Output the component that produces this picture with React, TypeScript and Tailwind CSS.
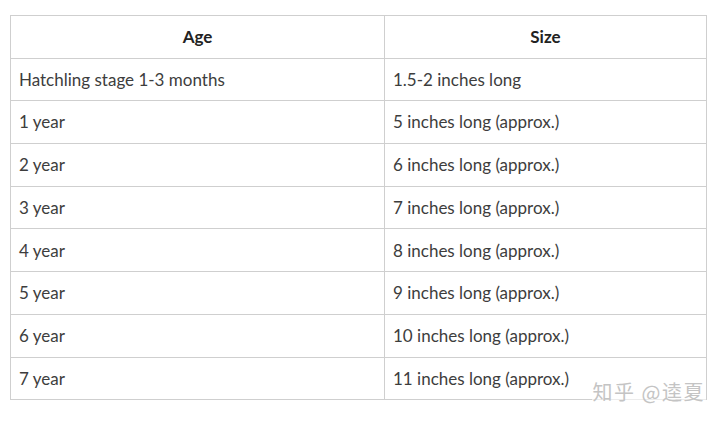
import React from "react";

const rows = [
  { age: "Hatchling stage 1-3 months", size: "1.5-2 inches long" },
  { age: "1 year", size: "5 inches long (approx.)" },
  { age: "2 year", size: "6 inches long (approx.)" },
  { age: "3 year", size: "7 inches long (approx.)" },
  { age: "4 year", size: "8 inches long (approx.)" },
  { age: "5 year", size: "9 inches long (approx.)" },
  { age: "6 year", size: "10 inches long (approx.)" },
  { age: "7 year", size: "11 inches long (approx.)" },
];

const App = () => {
  return (
    <div className="w-[720px] h-[423px] bg-white pt-[15px] pl-[10px] font-['Lato','Noto_Sans',sans-serif]">
      <div className="relative w-[697px]">
        <table className="w-full border-collapse table-fixed border border-[#cfcfcf] text-[17px] text-[#3d3d3d]">
          <colgroup>
            <col className="w-[374px]" />
            <col />
          </colgroup>
          <thead>
            <tr className="h-[42.7px]">
              <th className="border border-[#cfcfcf] font-bold text-[#222] text-center">Age</th>
              <th className="border border-[#cfcfcf] font-bold text-[#222] text-center">Size</th>
            </tr>
          </thead>
          <tbody>
            {rows.map((row, index) => (
              <tr key={index} className="h-[42.7px]">
                <td className="border border-[#cfcfcf] px-[8px] align-middle">{row.age}</td>
                <td className="border border-[#cfcfcf] px-[8px] align-middle">{row.size}</td>
              </tr>
            ))}
          </tbody>
        </table>
        <div className="absolute right-[1px] bottom-[-5px] bg-white/60 px-[1px] text-[20px] leading-[26px] tracking-[1.5px] text-[#c4c4c4] font-['Noto_Sans_CJK_SC',sans-serif]">
          知乎 @逵夏
        </div>
      </div>
    </div>
  );
};

export default App;
